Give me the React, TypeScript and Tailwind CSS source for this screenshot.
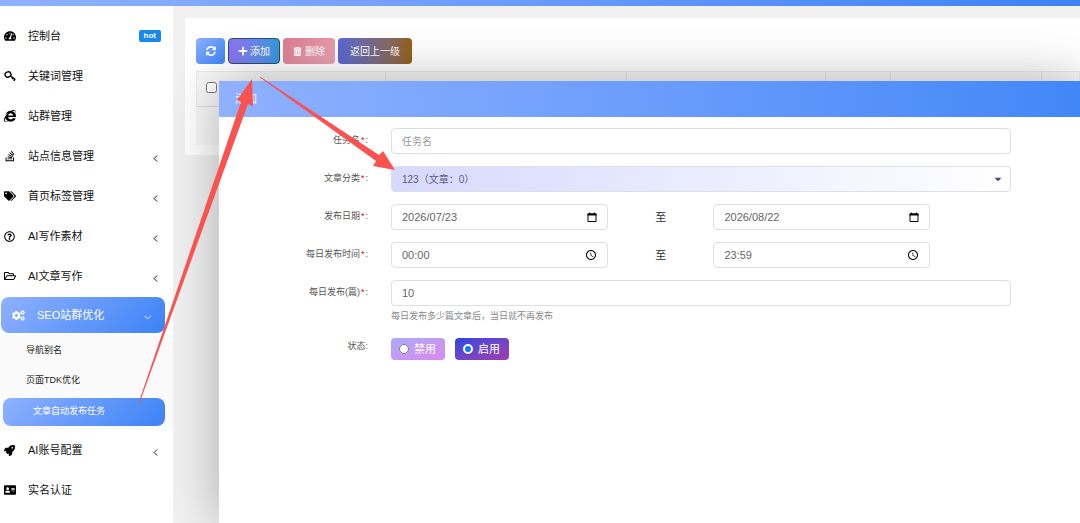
import type { ReactNode } from "react";
import {
    FaTachometerAlt,
    FaInternetExplorer,
    FaStackOverflow,
    FaTags,
    FaRegQuestionCircle,
    FaRegFolderOpen,
    FaCogs,
    FaRocket,
    FaAddressCard,
    FaPlus,
    FaTrashAlt,
    FaCaretDown,
} from "react-icons/fa";
import { FiChevronDown, FiChevronLeft } from "react-icons/fi";
import { MdAccessTime } from "react-icons/md";

const fieldClass =
    "block h-[26px] w-full rounded border border-[#dcdfe3] bg-white px-[10px] text-[11px] text-[#666] outline-none placeholder:text-[10px] placeholder:text-[#999]";

function KeyIcon() {
    return (
        <svg viewBox="0 0 12 12" className="h-3 w-3" fill="none" stroke="currentColor">
            <ellipse cx="4" cy="4.5" rx="3" ry="2.6" transform="rotate(-25 4 4.5)" strokeWidth="1.4" />
            <path d="M6.200 5.800 L11.300 9.600" strokeWidth="1.400" />
            <path d="M8 9 L9 7.600 M9.800 10.700 L10.900 9.200" strokeWidth="1.600" />
        </svg>
    );
}

function RefreshIcon() {
    return (
        <svg viewBox="0 0 1536 1536" className="h-[10px] w-[10px]" fill="currentColor">
            <path d="M1511 928q0 5-1 7-64 268-268 434.500T764 1536q-146 0-282.500-55T238 1324l-129 129q-19 19-45 19t-45-19-19-45V960q0-26 19-45t45-19h448q26 0 45 19t19 45-19 45l-137 137q71 66 161 102t187 36q134 0 250-65t186-179q11-17 53-117 8-23 30-23h192q13 0 22.500 9.500t9.500 22.500zm25-800v448q0 26-19 45t-45 19h-448q-26 0-45-19t-19-45 19-45l138-138Q969 256 768 256q-134 0-250 65T332 500q-11 17-53 117-8 23-30 23H50q-13 0-22.500-9.500T18 608v-7q65-268 270-434.500T768 0q146 0 284 55.500T1297 212l130-129q19-19 45-19t45 19 19 45z" />
        </svg>
    );
}

function CalendarIcon() {
    return (
        <svg viewBox="0 0 10 11" className="h-[11px] w-[10px]" fill="none" stroke="currentColor">
            <path d="M1 2 H9 V9.500 H1 Z" strokeWidth="1" />
            <path d="M0.500 2.500 H9.500" strokeWidth="2" />
            <path d="M2.500 0.500 V2 M7.500 0.500 V2" strokeWidth="1" />
        </svg>
    );
}

function MenuItem({ icon, label, right }: { icon: ReactNode; label: string; right?: ReactNode }) {
    return (
        <li>
            <a href="#" className="flex h-10 items-center pr-3 pl-1 text-[11px] text-[#111]">
                <span className="w-6 text-[12px] text-black">{icon}</span>
                <span className="flex-1">{label}</span>
                {right}
            </a>
        </li>
    );
}

function Arrow() {
    return <FiChevronLeft className="mt-[5px] text-[11px] text-black" />;
}

function Sidebar() {
    return (
        <nav className="w-[173px] shrink-0 bg-white pt-[10px]">
            <ul>
                <MenuItem
                    icon={<FaTachometerAlt />}
                    label="控制台"
                    right={<span className="rounded-xs bg-[#1688f0] px-[5px] text-[8px] leading-3 font-bold text-white">hot</span>}
                />
                <MenuItem icon={<KeyIcon />} label="关键词管理" />
                <MenuItem icon={<FaInternetExplorer />} label="站群管理" />
                <MenuItem icon={<FaStackOverflow />} label="站点信息管理" right={<Arrow />} />
                <MenuItem icon={<FaTags />} label="首页标签管理" right={<Arrow />} />
                <MenuItem icon={<FaRegQuestionCircle className="text-[11px]" />} label="AI写作素材" right={<Arrow />} />
                <MenuItem icon={<FaRegFolderOpen />} label="AI文章写作" right={<Arrow />} />
                <li className="pt-[1px]">
                    <a
                        href="#"
                        className="mr-2 ml-[1px] flex h-9 items-center rounded-lg bg-[linear-gradient(135deg,#8fb1ff,#3c82f6)] pr-3 pl-[11px] text-[11px] text-white"
                    >
                        <FaCogs className="mr-3 text-[13px]" />
                        <span className="flex-1">SEO站群优化</span>
                        <FiChevronDown className="mt-1 text-[11px]" />
                    </a>
                    <ul className="mt-[1px] bg-[#fafafa] pt-[2px] pb-1 text-[9px] text-[#222]">
                        <li>
                            <a href="#" className="flex h-[30px] items-center pl-[26px]">导航别名</a>
                        </li>
                        <li>
                            <a href="#" className="flex h-[30px] items-center pl-[26px]">页面TDK优化</a>
                        </li>
                        <li className="pt-[2px]">
                            <a
                                href="#"
                                className="mr-2 ml-[3px] flex h-7 items-center rounded-lg bg-[linear-gradient(135deg,#8fb1ff,#3c82f6)] pl-[30px] text-white"
                            >
                                文章自动发布任务
                            </a>
                        </li>
                    </ul>
                </li>
                <MenuItem icon={<FaRocket className="text-[11px]" />} label="AI账号配置" right={<Arrow />} />
                <MenuItem icon={<FaAddressCard />} label="实名认证" />
            </ul>
        </nav>
    );
}

function TaskList() {
    return (
        <section className="mt-3 ml-3 h-[137px] bg-white pt-5 pl-[11px]">
            <div className="flex gap-[3px] text-[10px] text-white">
                <button aria-label="刷新" className="flex h-[26px] w-[29px] items-center justify-center rounded bg-[linear-gradient(135deg,#8fb1ff,#3c82f6)]">
                    <RefreshIcon />
                </button>
                <button className="flex h-[26px] w-[52px] items-center justify-center gap-[2px] rounded border border-[#28506e] bg-linear-to-r from-[#8b72f3] to-[#2f98e0]">
                    <FaPlus /> 添加
                </button>
                <button className="flex h-[26px] w-[52px] items-center justify-center gap-[3px] rounded bg-[linear-gradient(135deg,#dc7c8e,#eba5b5)]">
                    <FaTrashAlt className="text-[9px]" /> 删除
                </button>
                <button className="h-[26px] w-[74px] rounded bg-linear-to-r from-[#5d66d8] to-[#976008]">返回上一级</button>
            </div>
            <table className="mt-[7px] w-full table-fixed border-collapse bg-[#f8f8f8]">
                <thead>
                    <tr className="h-[35px] border border-[#ececec] border-b-[#dedede]">
                        <th className="w-[189px] border-r border-[#e8e8e8] pb-1 pl-[9px] text-left">
                            <input type="checkbox" aria-label="全选" className="block h-[11px] w-[11px]" />
                        </th>
                        <th className="w-[241px] border-r border-[#e8e8e8]"></th>
                        <th className="w-[199px] border-r border-[#e8e8e8]"></th>
                        <th className="w-[65px] border-r border-[#e8e8e8]"></th>
                        <th className="w-[151px] border-r border-[#e8e8e8]"></th>
                        <th></th>
                    </tr>
                </thead>
                <tbody>
                    <tr className="h-[38px]">
                        <td colSpan={6}></td>
                    </tr>
                </tbody>
            </table>
        </section>
    );
}

function Row({ label, id, required = true, children }: { label: string; id?: string; required?: boolean; children: ReactNode }) {
    return (
        <div className="flex">
            <label htmlFor={id} className="w-[149px] shrink-0 pt-[6px] text-right text-[9px] leading-3 text-[#555]">
                {label}
                {required && <span className="mx-[1px] text-red-600">*</span>}:
            </label>
            <div className="ml-[23px] flex-1">{children}</div>
        </div>
    );
}

function Range({ id, from, to, name, icon }: { id: string; from: string; to: string; name: string; icon: ReactNode }) {
    return (
        <div className="flex items-center">
            <div className="relative w-[35%]">
                <input id={id} defaultValue={from} className={fieldClass} />
                <span className="absolute inset-y-0 right-[11px] flex items-center text-black">{icon}</span>
            </div>
            <span className="w-[17%] text-center text-[11px] text-[#333]">至</span>
            <div className="relative w-[35%]">
                <input aria-label={name} defaultValue={to} className={fieldClass} />
                <span className="absolute inset-y-0 right-[11px] flex items-center text-black">{icon}</span>
            </div>
        </div>
    );
}

function AddDialog() {
    return (
        <div
            role="dialog"
            aria-label="添加"
            className="absolute top-[75px] right-0 bottom-0 left-[46px] bg-white shadow-[1px_1px_50px_rgba(0,0,0,0.3)]"
        >
            <h2 className="flex h-9 items-center bg-linear-to-r from-[#8fb1ff] to-[#4287f7] pl-4 text-[11px] text-white">添加</h2>
            <form className="flex flex-col gap-3 pt-[11px] pr-[69px]">
                <Row label="任务名" id="name">
                    <input id="name" placeholder="任务名" className={fieldClass} />
                </Row>
                <Row label="文章分类" id="category">
                    <div className="relative">
                        <select
                            id="category"
                            className="block h-[26px] w-full appearance-none rounded border border-[#dcdfe3] bg-linear-to-r from-[#d6d9fd] to-white px-[10px] text-[10px] text-[#5f5490]"
                        >
                            <option>123（文章：0）</option>
                        </select>
                        <FaCaretDown className="pointer-events-none absolute top-2 right-2 text-[10px] text-[#4b4380]" />
                    </div>
                </Row>
                <Row label="发布日期" id="date">
                    <Range id="date" from="2026/07/23" to="2026/08/22" name="结束日期" icon={<CalendarIcon />} />
                </Row>
                <Row label="每日发布时间" id="time">
                    <Range id="time" from="00:00" to="23:59" name="结束时间" icon={<MdAccessTime className="text-[12px]" />} />
                </Row>
                <Row label="每日发布(篇)" id="count">
                    <input id="count" defaultValue="10" className={fieldClass} />
                    <p className="mt-1 text-[9px] leading-3 text-[#888]">每日发布多少篇文章后，当日就不再发布</p>
                </Row>
                <Row label="状态" required={false}>
                    <div className="mt-1 flex gap-[10px] text-[11px] text-white">
                        <label className="flex h-[22px] w-[54px] items-center gap-[5px] rounded-sm bg-linear-to-br from-[#a9a9fb] to-[#da88ec] pl-2">
                            <input type="radio" name="status" className="h-[10px] w-[10px]" />
                            禁用
                        </label>
                        <label className="flex h-[22px] w-[54px] items-center gap-[5px] rounded-sm bg-linear-to-br from-[#2b43e0] to-[#a03aae] pl-2">
                            <input
                                type="radio"
                                name="status"
                                defaultChecked
                                className="h-[10px] w-[10px] appearance-none rounded-full border-2 border-white bg-[#0b79ff]"
                            />
                            启用
                        </label>
                    </div>
                </Row>
            </form>
        </div>
    );
}

export default function App() {
    return (
        <div className="relative flex h-screen flex-col overflow-hidden bg-[#f1f1f1] font-['Liberation_Sans','Noto_Sans_CJK_SC',sans-serif]">
            <header className="h-[6px] shrink-0 bg-linear-to-r from-[#8fb1ff] to-[#3c82f6]" />
            <div className="flex flex-1">
                <Sidebar />
                <main className="relative flex-1 overflow-hidden">
                    <TaskList />
                    <AddDialog />
                </main>
            </div>
            {/* guide arrows: menu entry -> add button -> category field */}
            <svg viewBox="0 0 400 410" className="pointer-events-none absolute top-0 left-0 h-[410px] w-[400px]" fill="#f9524f">
                <path d="M138.500 403 L241 102 L237 100 L252 79 L253 106 L248 104 L139.500 403 Z" />
                <path d="M260 76.500 L379 155 L383 151 L395 170 L373 166 L376 161 L260 77.500 Z" />
            </svg>
        </div>
    );
}
